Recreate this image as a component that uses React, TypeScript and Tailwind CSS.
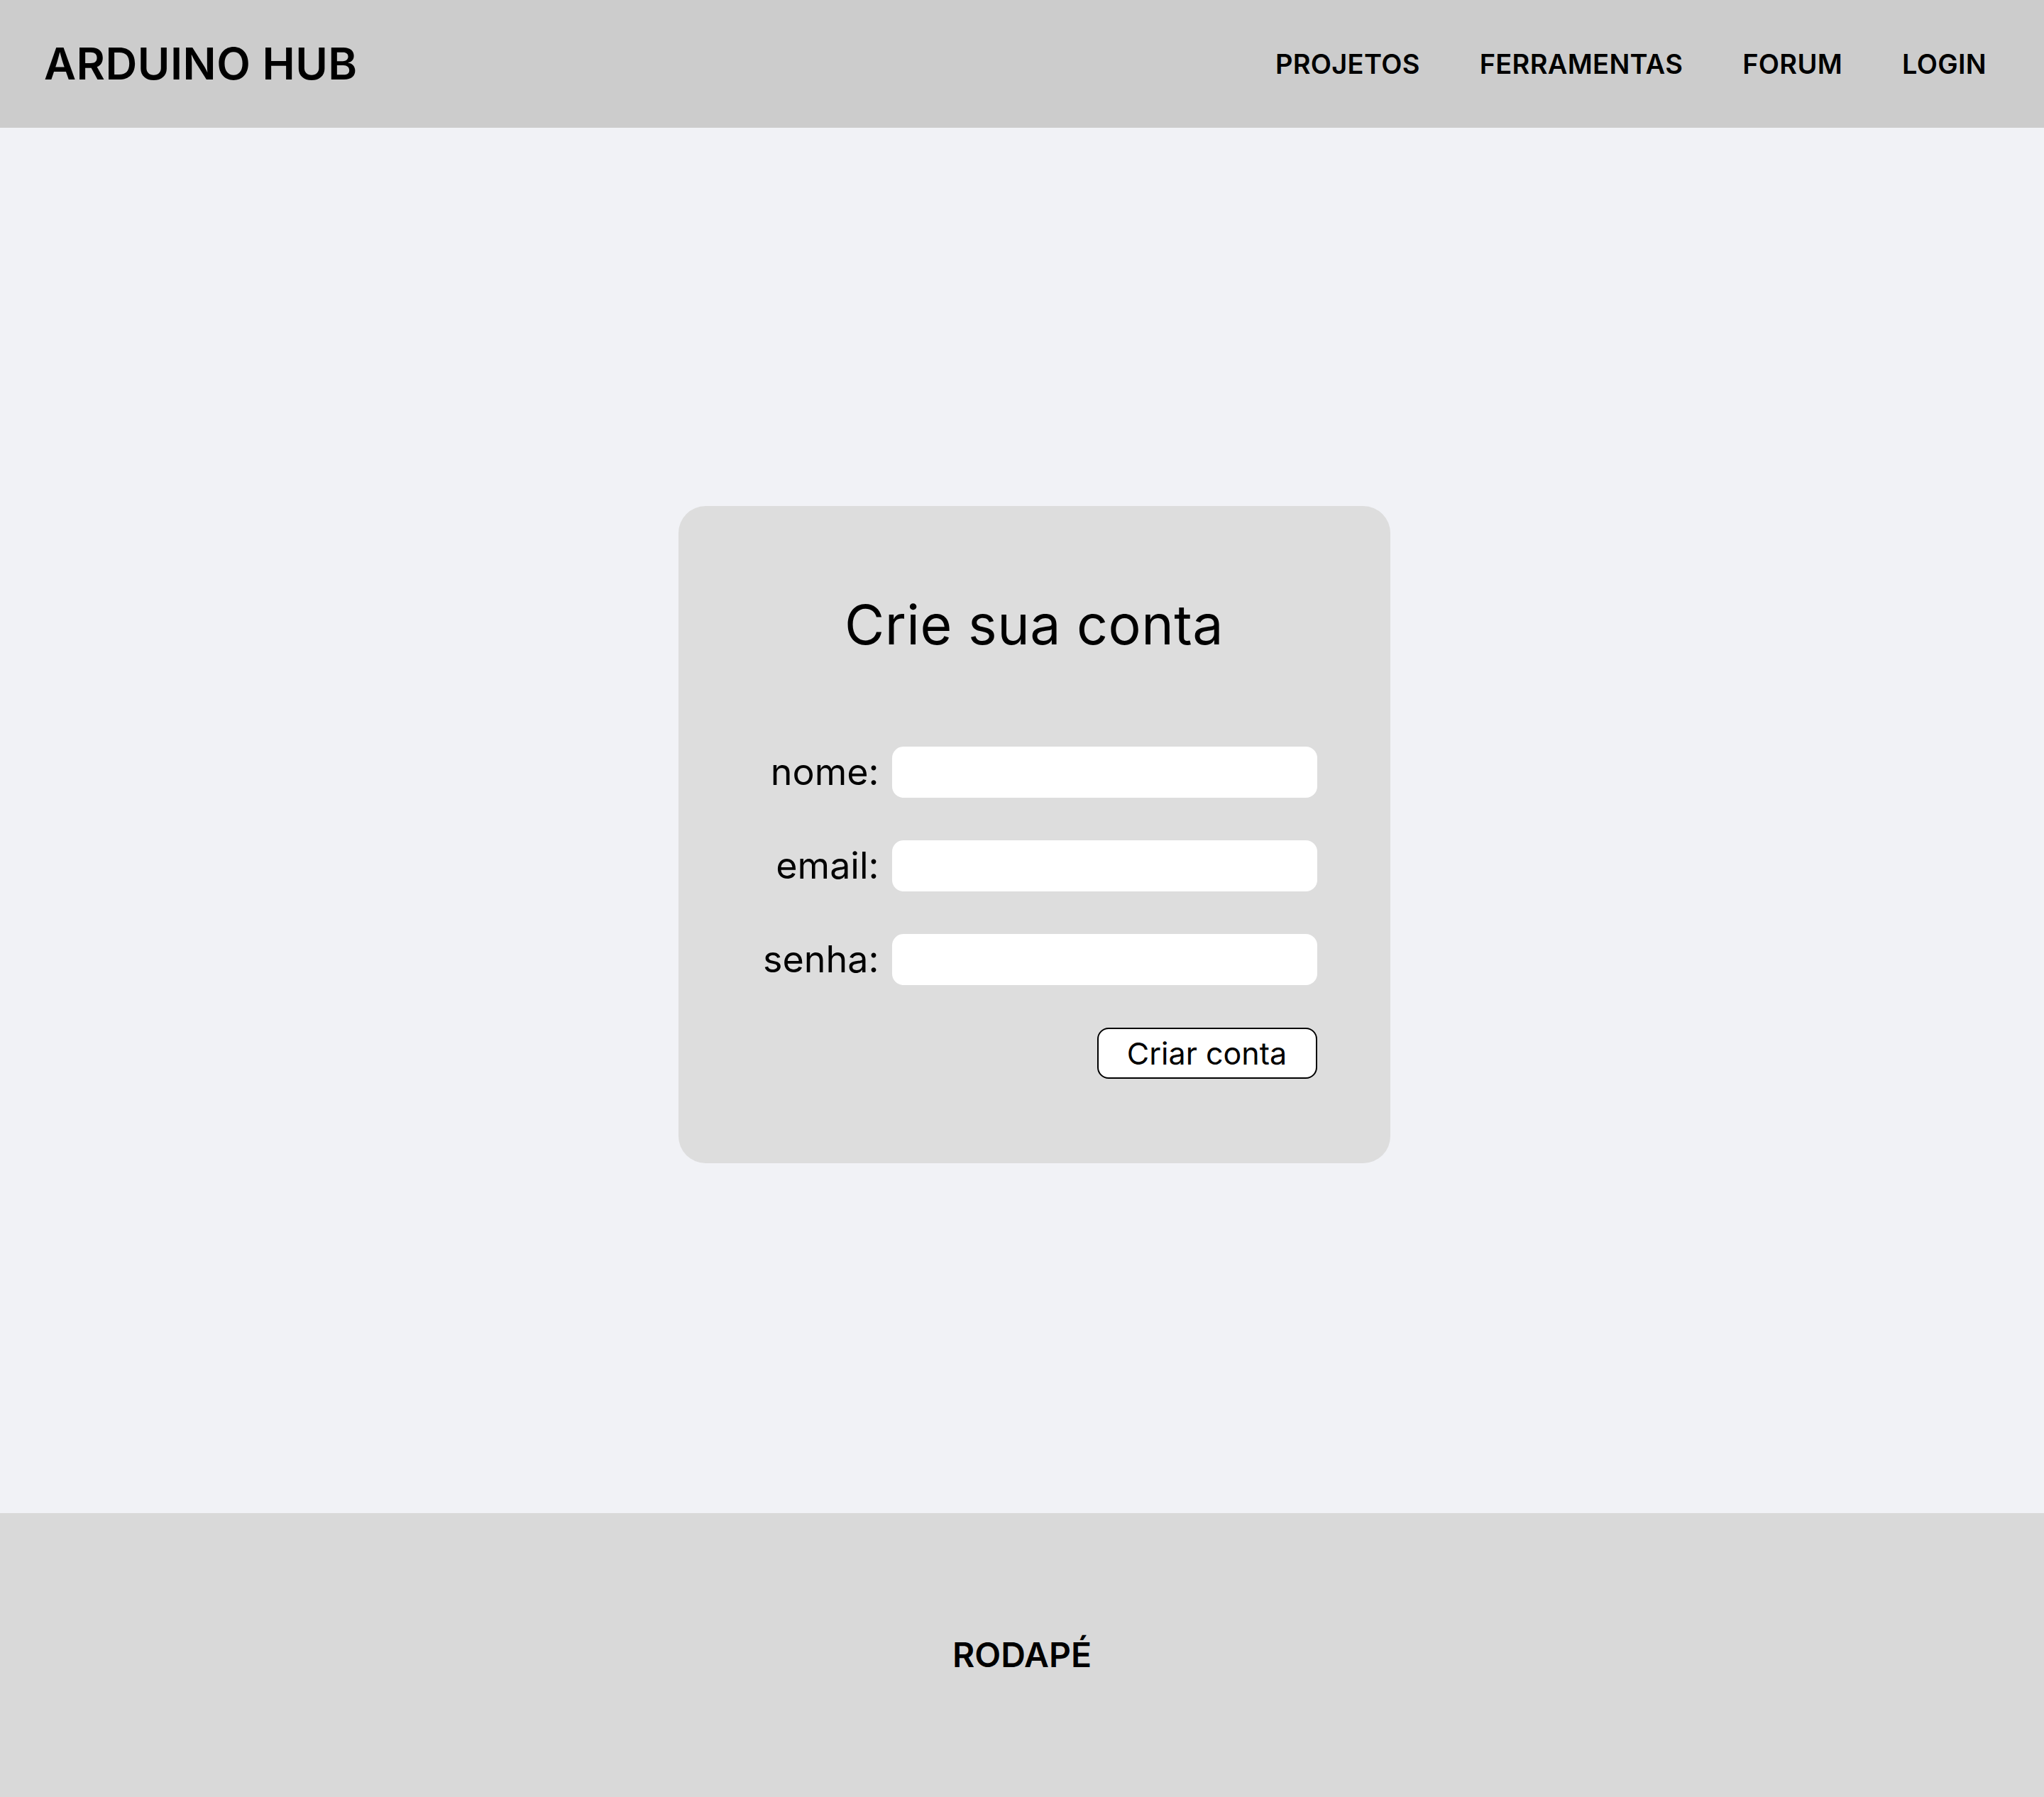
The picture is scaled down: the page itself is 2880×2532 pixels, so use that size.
import React from 'react';

const navItems = ['PROJETOS', 'FERRAMENTAS', 'FORUM', 'LOGIN'];

const fields = [
  { id: 'nome', label: 'nome:', type: 'text' },
  { id: 'email', label: 'email:', type: 'email' },
  { id: 'senha', label: 'senha:', type: 'password' },
];

const App: React.FC = () => {
  return (
    <div className="min-h-screen flex flex-col text-black font-['Inter','Noto_Sans',sans-serif]">
      <header className="h-[180px] bg-[#cccccc] flex items-center justify-between pl-[62px] pr-[81px]">
        <h1 className="text-[62px] font-semibold leading-none tracking-[0.5px]">ARDUINO HUB</h1>
        <nav className="flex items-center gap-[84px]">
          {navItems.map((item) => (
            <a key={item} href="#" className="text-[38px] font-semibold leading-none tracking-[0.3px]">
              {item}
            </a>
          ))}
        </nav>
      </header>

      <main className="h-[1952px] bg-[#f1f2f6] flex items-center justify-center pt-[40px] pl-[34px]">
        <div className="w-[1003px] bg-[#dddddd] rounded-[38px] pt-[122px] pb-[119px] px-[103px]">
          <h2 className="h-[90px] text-[77px] leading-[90px] text-center font-normal tracking-[0.5px]">Crie sua conta</h2>

          <form className="mt-[127px] flex flex-col gap-[60px]" onSubmit={(e) => e.preventDefault()}>
            {fields.map((f) => (
              <div key={f.id} className="flex items-center gap-[18px]">
                <label htmlFor={f.id} className="w-[180px] text-right text-[52px] leading-none">
                  {f.label}
                </label>
                <input
                  id={f.id}
                  type={f.type}
                  className="w-[599px] h-[72px] bg-white rounded-[16px] outline-none px-4 text-[36px]"
                />
              </div>
            ))}
            <div className="flex justify-end">
              <button
                type="submit"
                className="w-[310px] h-[72px] bg-white border-2 border-black rounded-[16px] text-[43px] leading-none"
              >
                Criar conta
              </button>
            </div>
          </form>
        </div>
      </main>

      <footer className="h-[400px] bg-[#d9d9d9] flex items-center justify-center">
        <p className="text-[48px] font-semibold leading-none">RODAPÉ</p>
      </footer>
    </div>
  );
};

export default App;
